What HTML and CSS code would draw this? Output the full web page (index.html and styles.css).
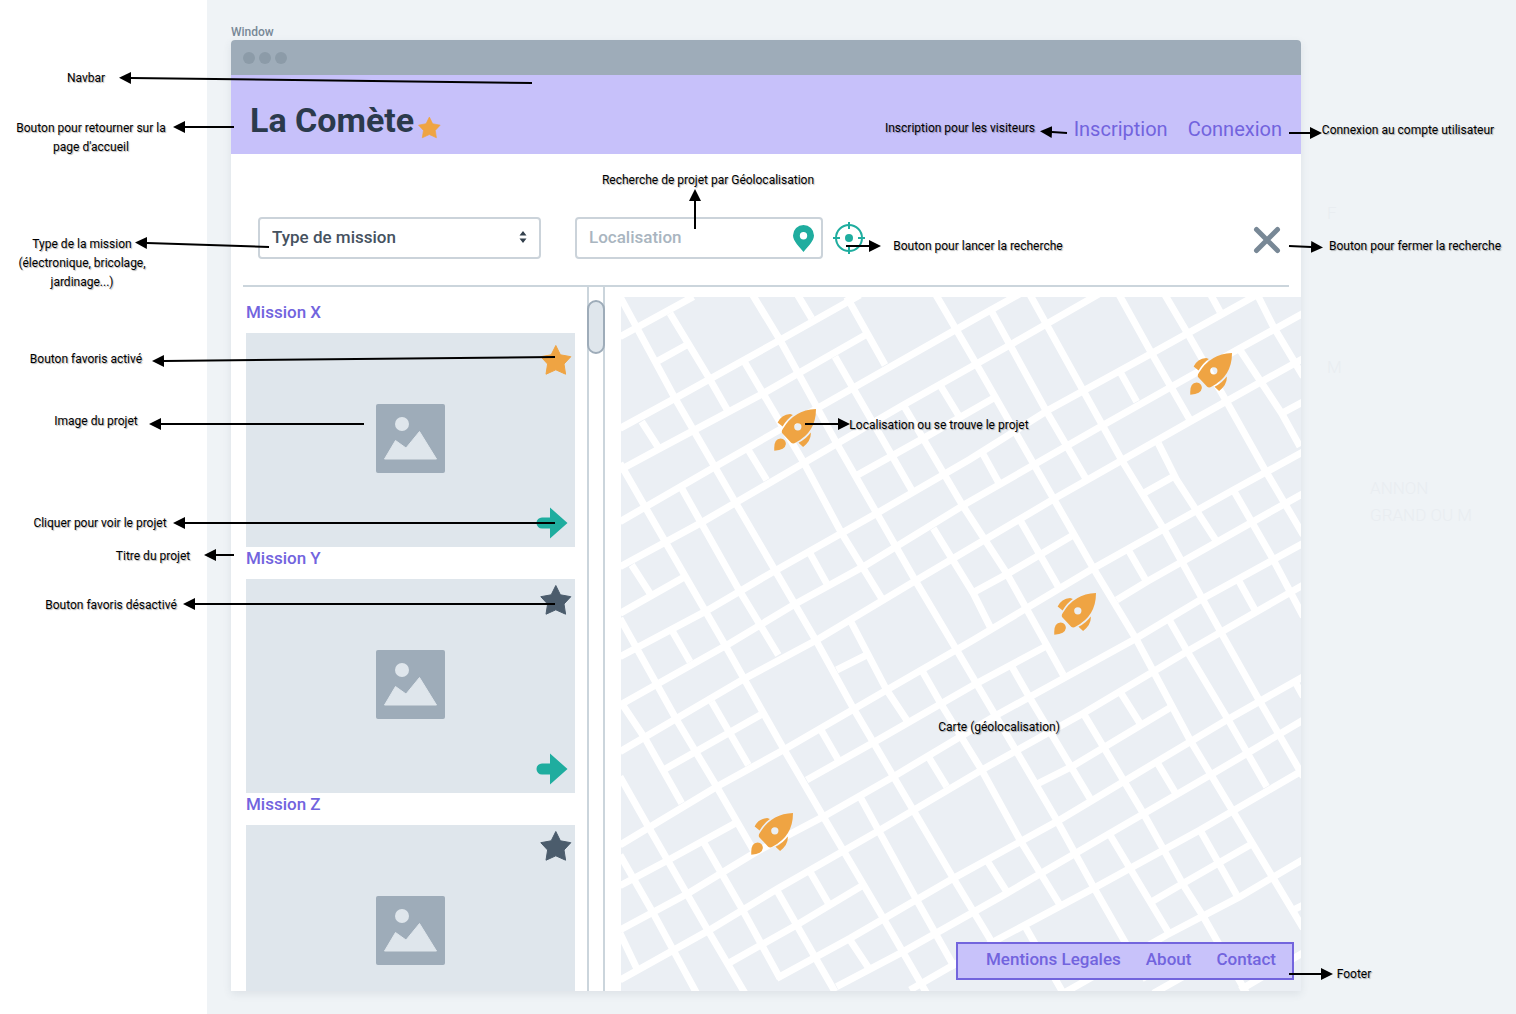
FILE: index.html
```html
<!DOCTYPE html>
<html lang="fr">
<head>
<meta charset="utf-8">
<title>La Comète – Recherche de missions</title>
<link rel="stylesheet" href="styles.css">
</head>
<body>
<svg class="defs" aria-hidden="true">
  <symbol id="star" viewBox="0 0 32 32"><path d="M15.8 1.5 20.4 10.8 30.8 12.7 24 20 25.6 30.2 15.8 25.8 6 30.2 7.6 20 .8 12.7 11.2 10.8Z" fill="currentColor" stroke="currentColor" stroke-linejoin="round"/></symbol>
  <symbol id="picture" viewBox="0 0 69 69"><rect width="69" height="69" rx="2" fill="#9eacb9"/><circle cx="26" cy="20" r="7" fill="#dfe6ec"/><path d="M8.500 55 19.500 36.500 30 44 43.500 27.500 60.500 55Z" fill="#dfe6ec" stroke="#dfe6ec" stroke-linejoin="round"/></symbol>
  <symbol id="go" viewBox="0 0 32 32"><path d="M14 .5 31.500 16 14 31.500V21.500H6a5.500 5.500 0 0 1 0-11h8Z" fill="currentColor"/></symbol>
  <symbol id="rocket" viewBox="0 0 127 127"><path fill="#efa443" fill-rule="evenodd" d="M127 0Q60 3 27 60Q21 68 25 73L52 102Q58 107 66 101Q127 70 127 0ZM72 43a11 11 0 1 1 0 22a11 11 0 1 1 0-22ZM11 41Q22 17 49 15L57 18Q38 31 26 53ZM111 71Q114 95 88 115L74 102Q98 90 111 71ZM1 126Q-2 90 20 89Q36 91 36 106Q34 124 1 126Z"/></symbol>
</svg>

<div class="board">
  <p class="window-label">Window</p>
  <main class="window">
    <div class="titlebar"><i></i><i></i><i></i></div>

    <header class="navbar">
      <a class="brand" href="#">La Comète<svg><use href="#star"/></svg></a>
      <nav class="account">
        <a href="#">Inscription</a>
        <a href="#">Connexion</a>
      </nav>
    </header>

    <form class="search">
      <div class="field type">
        <select aria-label="Type de mission"><option>Type de mission</option></select>
        <svg class="caret" viewBox="0 0 8 12"><path d="M4 0 7.500 4.500h-7ZM4 12 .5 7.500h7Z" fill="#33404d"/></svg>
      </div>
      <div class="field place">
        <input type="text" placeholder="Localisation" aria-label="Localisation">
        <svg class="pin" viewBox="0 0 21 27"><path fill="#1fad9f" fill-rule="evenodd" d="M10.500 0A10.500 10.500 0 0 1 21 10.500C21 16 14.500 22 10.500 27 6.500 22 0 16 0 10.500A10.500 10.500 0 0 1 10.500 0Zm0 7a3.700 3.700 0 1 0 0 7.400a3.700 3.700 0 0 0 0-7.400Z"/></svg>
      </div>
      <button class="locate" type="submit" aria-label="Lancer la recherche">
        <svg viewBox="0 0 32 32" fill="none" stroke="#1fad9f" stroke-width="2"><circle cx="16" cy="16" r="13"/><circle cx="16" cy="16" r="4" fill="#1fad9f" stroke="none"/><path d="M16 0v7M16 25v7M0 16h7M25 16h7"/></svg>
      </button>
      <button class="close" type="reset" aria-label="Fermer la recherche">
        <svg viewBox="0 0 32 32" fill="none" stroke="#788896" stroke-width="5" stroke-linecap="round"><path d="M5.500 5.500 26.500 26.500M26.500 5.500 5.500 26.500"/></svg>
      </button>
    </form>

    <div class="content">
      <section class="missions">
        <article>
          <h2>Mission X</h2>
          <div class="card lead">
            <svg class="picture"><use href="#picture"/></svg>
            <button class="fav on" aria-label="Retirer des favoris"><svg><use href="#star"/></svg></button>
            <button class="go" aria-label="Voir le projet"><svg><use href="#go"/></svg></button>
          </div>
        </article>
        <article>
          <h2>Mission Y</h2>
          <div class="card">
            <svg class="picture"><use href="#picture"/></svg>
            <button class="fav" aria-label="Ajouter aux favoris"><svg><use href="#star"/></svg></button>
            <button class="go" aria-label="Voir le projet"><svg><use href="#go"/></svg></button>
          </div>
        </article>
        <article>
          <h2>Mission Z</h2>
          <div class="card">
            <svg class="picture"><use href="#picture"/></svg>
            <button class="fav" aria-label="Ajouter aux favoris"><svg><use href="#star"/></svg></button>
            <button class="go" aria-label="Voir le projet"><svg><use href="#go"/></svg></button>
          </div>
        </article>
      </section>
      <div class="track"><div class="thumb"></div></div>
      <section class="map" aria-label="Carte">
        <svg class="streets" viewBox="3 21 2040 2082" preserveAspectRatio="xMinYMin slice" fill="none" stroke="#fff" stroke-width="21">
          <!-- streets rising to the right -->
          <path d="M0 140 220 20M110 215 200 165M0 415 165 325 480 150 720 15M0 540 120 475 430 310 740 133M0 695 285 530 600 350 1050 95 1220 0M0 830 240 700 550 520 850 345 1170 165 1440 10M0 970 195 860M0 1100 255 965 460 845 770 670 1050 508 1285 360 1595 190 1910 15M705 559 910 445 1120 325M0 1245 330 1060 520 945 730 830 1040 640 1450 405 1850 180 2050 70M0 1385 375 1165 590 1050 890 870 1305 625 1710 395 2050 205"/>
          <path d="M1055 910 1160 853 1360 735M1570 610 1660 560M1985 370 2050 335M0 1665 290 1490 490 1380 800 1200 1060 1050 1420 835 1840 600 2050 485M130 1440 430 1270M650 1140 740 1095M0 1787 145 1710 345 1600M560 1470 765 1355 1070 1180 1285 1065M0 1920 205 1810 410 1685 610 1580 820 1460 1130 1275 1540 1050 1740 930 2050 760M1490 930 1580 875 1890 700 2050 610M0 2070 260 1925 475 1795 780 1620 1085 1440 1390 1270 1700 1085 2050 885"/>
          <path d="M325 2020 530 1905 730 1785M470 2065 690 1945 1000 1765 1310 1595 1510 1475 1820 1290 2050 1160M1255 1480 1355 1430 1655 1250M650 2090 850 1985 1160 1810 1470 1630 1780 1450 2050 1290M870 2100 1130 1950 1430 1790 1740 1620 2050 1440M1595 1835 1690 1780 1890 1665M1330 2110 1640 1935 1860 1820 2050 1708M2010 1865 2050 1845M1600 2110 1760 2020M1860 2100 2050 1988"/>
          <!-- streets falling to the right -->
          <path d="M0 20 165 325 345 635 590 1055 700 1255 1000 1765 1130 1980M150 70 265 260 325 365M395 10 480 150 650 460 885 870 1010 1080 1190 1385 1310 1590 1420 1790 1580 2070M905 1140 965 1245 1085 1440 1200 1650 1320 1845M530 10 575 85M680 20 795 225M370 210 550 515 665 730 785 925M645 200 760 400 875 600M850 345 1030 650 1160 850 1280 1065 1330 1155M960 285 1015 375M945 10 1065 215 1300 625 1420 835 1550 1050 1710 1350 1960 1765 2050 1915M1115 65 1280 365 1400 570M1225 5 1505 510 1630 715 1810 1040 1920 1235 2050 1460"/>
          <path d="M1495 10 1595 190 1710 390M1635 15 1700 125 1820 335 1935 540 2050 735M1770 10 1800 65M1910 10 1960 110 2050 260M1860 180 1985 370 2040 470M1500 245 1550 335M1615 460 1670 570 1790 755M1840 600 1955 800 2050 980M1085 485 1140 585M1200 690 1315 890M1525 780 1580 875M1855 870 1905 960M1645 985 1705 1090 1825 1290 1940 1490M65 395 120 480M0 520 75 650 315 1065 490 1375 610 1580 790 1885 920 2110M385 480 440 570M185 595 360 905 475 1095M570 790 620 880M35 825 90 910M0 985 170 1290 290 1490 400 1680M155 1020 210 1115M690 990 800 1200 860 1290M940 715 1060 910 1110 1010"/>
          <path d="M5 1240 75 1345 185 1540M275 1235 385 1425M0 1460 85 1610 260 1915 375 2110M250 1655 365 1855 480 2065M0 1695 100 1870 230 2110M0 1930 50 2035M600 1315 655 1410M720 1520 890 1830 1005 2035M925 1400 980 1490M570 1745 625 1840M470 1800 590 2010 645 2105M690 1950 750 2040M1170 1120 1230 1225 1410 1525M1390 1270 1570 1570 1690 1785 1750 1880 1880 2110M1500 1205 1560 1300M1610 1415 1670 1515M1470 1635 1650 1935M1740 1620 1850 1815M1100 1710 1160 1805M2025 1175 2050 1220M1213 1905 1330 2110"/>
        </svg>
        <button class="marker m1" aria-label="Projet 1"><svg><use href="#rocket"/></svg></button>
        <button class="marker m2" aria-label="Projet 2"><svg><use href="#rocket"/></svg></button>
        <button class="marker m3" aria-label="Projet 3"><svg><use href="#rocket"/></svg></button>
        <button class="marker m4" aria-label="Projet 4"><svg><use href="#rocket"/></svg></button>
        <footer class="footer">
          <a href="#">Mentions Legales</a>
          <a href="#">About</a>
          <a href="#">Contact</a>
        </footer>
      </section>
    </div>
  </main>

  <!-- annotations over the mock-up -->
  <svg class="arrows" aria-hidden="true">
    <defs><marker id="head" markerUnits="userSpaceOnUse" markerWidth="12" markerHeight="12" refX="0" refY="6" orient="auto"><path d="M0 0 12 6 0 12Z"/></marker></defs>
    <path d="M532 83 131 78"/>
    <path d="M234 127H185"/>
    <path d="M269 247 147 243"/>
    <path d="M555 357 164 361"/>
    <path d="M364 424H161"/>
    <path d="M555 523H185"/>
    <path d="M234 555H216"/>
    <path d="M555 604H195"/>
    <path d="M695 229V201"/>
    <path d="M846 246H869"/>
    <path d="M1067 133 1052 132"/>
    <path d="M1289 133H1310"/>
    <path d="M1289 246 1311 247"/>
    <path d="M805 424H838"/>
    <path d="M1289 974H1321"/>
  </svg>
  <p class="note n-navbar">Navbar</p>
  <p class="note n-home">Bouton pour retourner sur la<br>page d'accueil</p>
  <p class="note n-type">Type de la mission<br>(électronique, bricolage,<br>jardinage...)</p>
  <p class="note n-fav-on">Bouton favoris activé</p>
  <p class="note n-image">Image du projet</p>
  <p class="note n-open">Cliquer pour voir le projet</p>
  <p class="note n-title">Titre du projet</p>
  <p class="note n-fav-off">Bouton favoris désactivé</p>
  <p class="note n-geo">Recherche de projet par Géolocalisation</p>
  <p class="note n-signup">Inscription pour les visiteurs</p>
  <p class="note n-login">Connexion au compte utilisateur</p>
  <p class="note n-run">Bouton pour lancer la recherche</p>
  <p class="note n-close">Bouton pour fermer la recherche</p>
  <p class="note n-spot">Localisation ou se trouve le projet</p>
  <p class="note n-map">Carte (géolocalisation)</p>
  <p class="note n-footer">Footer</p>

  <!-- erased notes that still show faintly -->
  <p class="erased e-1">F</p>
  <p class="erased e-2">M</p>
  <p class="erased e-3">ANNON<br>GRAND OU M</p>
</div>
</body>
</html>
```
FILE: styles.css
```css
* { box-sizing: border-box; }

body {
  margin: 0;
  background: #fff;
  color: #2b3a4c;
  font-family: Roboto, "Liberation Sans", sans-serif;
  font-weight: 500;
}

h2, p { margin: 0; font-weight: inherit; }
a { color: #7264de; text-decoration: none; }
button { padding: 0; border: 0; background: none; color: inherit; cursor: pointer; }
svg { display: block; }
.defs { position: absolute; width: 0; height: 0; }

.board {
  position: relative;
  min-height: 100vh;
  margin-left: 207px;
  padding: 24px 215px 23px 24px;
  background: #eff3f6;
}
.window-label { color: #788896; font-size: 12px; line-height: 16px; }

.window {
  display: flex;
  flex-direction: column;
  height: calc(100vh - 63px);
  min-height: 600px;
  border-radius: 4px 4px 0 0;
  background: #fff;
  box-shadow: 0 3px 8px rgba(60, 80, 100, .1);
  overflow: hidden;
}
.titlebar {
  display: flex;
  align-items: center;
  gap: 4px;
  flex: 0 0 35px;
  padding-left: 12px;
  background: #9eacb9;
}
.titlebar i { width: 12px; height: 12px; border-radius: 50%; background: #8c9ba8; }

.navbar {
  display: flex;
  justify-content: space-between;
  flex: 0 0 79px;
  padding: 24px 19px 0;
  background: #c7c1fa;
}
.brand { display: flex; gap: 4px; color: #2b3a4c; font-size: 34px; font-weight: 700; line-height: 42px; }
.brand svg { width: 23px; height: 23px; margin-top: 17px; color: #efa443; }
.account { display: flex; gap: 20px; padding-top: 18px; font-size: 20px; font-weight: 400; line-height: 24px; }

.search {
  display: flex;
  align-items: center;
  flex: none;
  margin: 0 12px;
  padding: 63px 6px 26px 15px;
  border-bottom: 2px solid #cbd5dc;
}
.field { position: relative; height: 42px; }
.type { width: 283px; margin-right: 34px; }
.place { width: 248px; margin-right: 10px; }
.field select, .field input {
  width: 100%;
  height: 100%;
  padding: 0 12px 2px;
  border: 2px solid #cbd3da;
  border-radius: 4px;
  background: #fff;
  color: #46525f;
  font: 500 17px Roboto, "Liberation Sans", sans-serif;
  appearance: none;
}
.field input::placeholder { color: #a9b5c0; opacity: 1; }
.caret { position: absolute; right: 14px; top: 14px; width: 8px; height: 12px; }
.pin { position: absolute; right: 9px; top: 8px; width: 21px; height: 27px; }
.locate, .close { width: 32px; height: 32px; }
.close { margin-left: auto; padding-top: 2px; }

.content { display: flex; flex: 1; min-height: 0; }
.missions { flex: 0 0 356px; padding: 14px 12px 0 15px; overflow: hidden; }
.missions h2 { height: 32px; color: #7264de; font-size: 17px; line-height: 22px; }
.card { display: grid; height: 214px; padding: 5px 3px 8px; background: #dfe6ec; }
.card > * { grid-area: 1 / 1; width: 32px; height: 32px; }
.card svg { width: 100%; height: 100%; }
.card .picture { place-self: center; width: 69px; height: 69px; }
.fav { place-self: start end; color: #4b5c6c; }
.fav.on { color: #efa443; }
.lead .fav { margin-top: 6px; }
.go { place-self: end; margin-right: 4px; color: #1fad9f; }

.track { flex: 0 0 18px; padding-top: 13px; border: solid #cbd5dc; border-width: 0 2px; }
.thumb { height: 54px; margin: 0 -2px; border: 2px solid #9eacb9; border-radius: 9px; background: #dfe6ec; }

.map { position: relative; flex: 1; margin: 10px 0 0 16px; background: #ebeff4; overflow: hidden; }
.streets { position: absolute; inset: 0; width: 100%; height: 100%; }
.marker { position: absolute; width: 42px; height: 42px; }
.marker svg { width: 100%; height: 100%; }
.m1 { left: 153px; top: 112px; }
.m2 { left: 569px; top: 56px; }
.m3 { left: 433px; top: 296px; }
.m4 { left: 130px; top: 516px; }

.footer {
  position: absolute;
  right: 7px;
  bottom: 11px;
  display: flex;
  justify-content: space-between;
  width: 338px;
  height: 38px;
  padding: 4px 16px 0 28px;
  border: 2px solid #7365dd;
  background: #c8c2fa;
  font-size: 17px;
  line-height: 22px;
}

/* annotation layer, shifted back over the white margin */
.arrows {
  position: absolute;
  left: -207px;
  top: 0;
  width: 1516px;
  height: 1014px;
  fill: none;
  stroke: #000;
  stroke-width: 2;
  pointer-events: none;
}
.arrows > path { marker-end: url(#head); }
.arrows marker path { fill: #000; stroke: none; }
.note {
  position: absolute;
  color: #000;
  font: 400 12px/19px Roboto, "Liberation Sans", sans-serif;
  text-align: center;
  text-shadow: 1px 1px 1px rgba(0, 0, 0, .3);
  white-space: nowrap;
  transform: translateX(-50%);
}
.n-navbar { left: -121px; top: 69px; }
.n-home { left: -116px; top: 119px; }
.n-type { left: -125px; top: 235px; }
.n-fav-on { left: -121px; top: 350px; }
.n-image { left: -111px; top: 412px; }
.n-open { left: -107px; top: 514px; }
.n-title { left: -54px; top: 547px; }
.n-fav-off { left: -96px; top: 596px; }
.n-geo { left: 501px; top: 171px; }
.n-signup { left: 753px; top: 119px; }
.n-login { left: 1201px; top: 121px; }
.n-run { left: 771px; top: 237px; }
.n-close { left: 1208px; top: 237px; }
.n-spot { left: 732px; top: 416px; }
.n-map { left: 792px; top: 718px; }
.n-footer { left: 1147px; top: 965px; }

.erased { position: absolute; color: #e9edf1; font-size: 17px; font-weight: 300; line-height: 27px; white-space: nowrap; }
.e-1 { left: 1120px; top: 200px; }
.e-2 { left: 1120px; top: 354px; }
.e-3 { left: 1163px; top: 475px; }
```
